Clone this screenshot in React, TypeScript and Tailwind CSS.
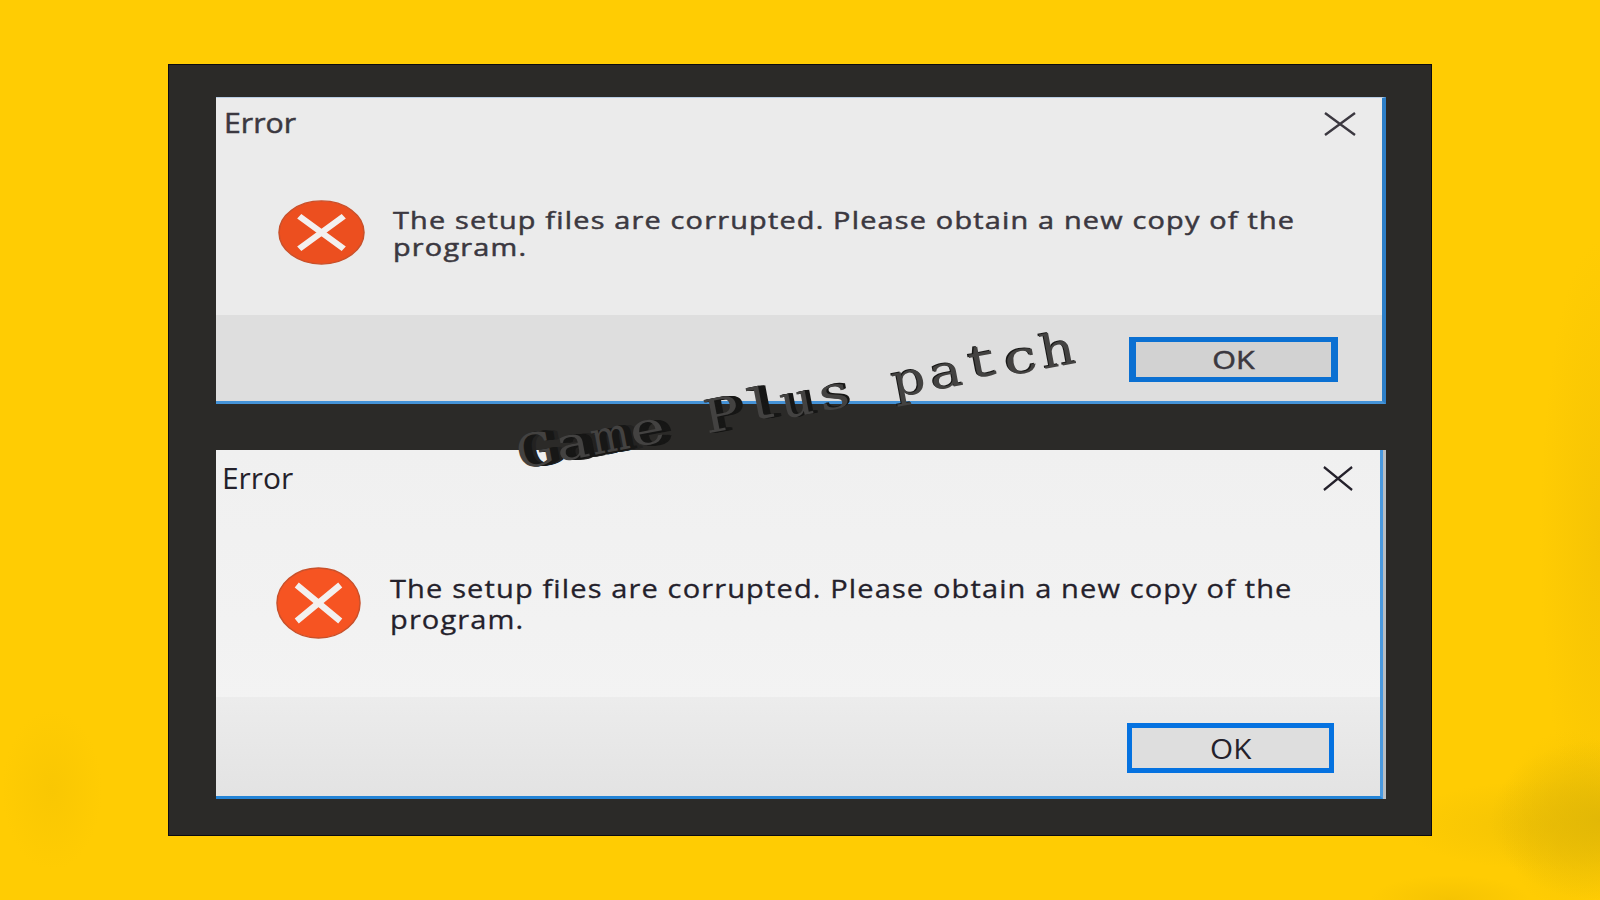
type DialogProps = {
    variant: "top" | "bottom";
}

type ArtLetter = {
    char: string;
    stretch: number;
    dx: number;
    dy: number;
    mono?: boolean;
}

// dx / dy is how far the extruded side of the letter reaches
const artLetters: ArtLetter[] = [
    {char: "G", stretch: 1, dx: 12, dy: 1},
    {char: "a", stretch: 1.2, dx: 13, dy: 2},
    {char: "m", stretch: 0.88, dx: 14, dy: 2},
    {char: "e", stretch: 1.28, dx: 7, dy: 2},
    {char: " ", stretch: 1, dx: 0, dy: 0},
    {char: "P", stretch: 1.15, dx: 6, dy: 1},
    {char: "l", stretch: 1.2, dx: 6, dy: 1, mono: true},
    {char: "u", stretch: 1.12, dx: 4, dy: 0},
    {char: "s", stretch: 1.3, dx: 2, dy: -1},
    {char: " ", stretch: 1, dx: 0, dy: 0},
    {char: "p", stretch: 1.15, dx: -1, dy: -1},
    {char: "a", stretch: 1.2, dx: -1, dy: -1},
    {char: "t", stretch: 1.3, dx: -1, dy: -1, mono: true},
    {char: "c", stretch: 1.3, dx: -1, dy: -1},
    {char: "h", stretch: 1.18, dx: -1, dy: -1},
];

function getExtrusion(dx: number, dy: number) {
    const steps = Math.max(Math.abs(dx), 1);
    const shadows: string[] = [];

    for (let i = 1; i <= steps; i++) {
        shadows.push(`${dx * i / steps}px ${dy * i / steps}px 0 ${i > 8 ? "#232221" : "#171716"}`);
    }

    return shadows.join(", ");
}

function WordArt() {
    return (
        <div className="absolute left-[522px] top-[422px] flex origin-bottom-left -rotate-[10.8deg] whitespace-pre font-['DejaVu_Serif',serif] text-[46px] leading-[62px] text-[#434241]">
            {artLetters.map((val, i) => (
                <span
                    key={i}
                    className={val.mono ? "flex w-[38px] justify-center font-['Liberation_Mono',monospace]" : "flex w-[38px] justify-center"}
                    style={{transform: `scaleX(${val.stretch})`, textShadow: getExtrusion(val.dx, val.dy)}}
                >
                    {val.char}
                </span>
            ))}
        </div>
    );
}

function CloseIcon({className}: {className: string}) {
    return (
        <svg className={className} viewBox="0 0 32 24" preserveAspectRatio="none" fill="none" stroke="currentColor" strokeWidth="2.4">
            <path d="M1 1L31 23M31 1L1 23" />
        </svg>
    );
}

function ErrorIcon({className}: {className: string}) {
    return (
        <svg className={className} viewBox="0 0 86 72" preserveAspectRatio="none">
            <ellipse cx="43" cy="36" rx="42" ry="35" fill="currentColor" stroke="#c9502a" strokeWidth="1.5" />
            <path d="M21 18L65 54M65 18L21 54" stroke="#f3f0ef" strokeWidth="6.5" />
        </svg>
    );
}

function ErrorDialog({variant}: DialogProps) {
    const isTop = variant === "top";

    return (
        <div className={isTop
            ? "flex h-[307px] w-[1170px] flex-col border-b-3 border-r-4 border-t border-b-[#4593d8] border-r-[#2d7fc8] border-t-[#b9cde4] bg-[#ebebeb] text-[#3b3840]"
            : "flex h-[349px] w-[1167px] flex-col border-b-3 border-r-3 border-b-[#2484d6] border-r-[#4a9ae0] bg-linear-to-b from-[#f0f0f0] to-[#f4f4f4] text-[#24212b] shadow-[3px_0_0_#b9bec2]"}
        >
            <div className={isTop ? "flex justify-between pl-[8px] pr-[26px] pt-[5px]" : "flex justify-between pl-[6px] pr-[27px] pt-[8px]"}>
                <h2 className={isTop
                    ? "origin-left scale-x-[1.08] text-[28px] leading-[38px] [-webkit-text-stroke:0.5px_#3b3840]"
                    : "origin-left scale-x-[1.03] text-[29px] leading-[40px]"}
                >
                    Error
                </h2>
                <CloseIcon className={isTop ? "mt-[9px] h-[24px] w-[32px]" : "mt-[8px] h-[25px] w-[30px]"} />
            </div>
            <div className={isTop ? "flex flex-1 pl-[62px]" : "flex flex-1 pl-[60px]"}>
                <ErrorIcon className={isTop ? "mt-[59px] h-[65px] w-[87px] shrink-0 text-[#ec4f1f]" : "mt-[69px] h-[72px] w-[85px] shrink-0 text-[#f65422]"} />
                <p className={isTop
                    ? "ml-[28px] mt-[65px] origin-left scale-x-[1.202] whitespace-nowrap text-[24px] leading-[27px] tracking-[1px] [-webkit-text-stroke:0.5px_#3b3840]"
                    : "ml-[29px] mt-[75px] origin-left scale-x-[1.117] whitespace-nowrap text-[26px] leading-[31px] tracking-[1px] [-webkit-text-stroke:0.3px_#24212b]"}
                >
                    The setup files are corrupted. Please obtain a new copy of the
                    <br />
                    program.
                </p>
            </div>
            <div className={isTop
                ? "flex h-[86px] shrink-0 items-center justify-end bg-[#dedede] pr-[44px] pt-[3px]"
                : "flex h-[99px] shrink-0 items-center justify-end bg-linear-to-b from-[#ececec] to-[#e3e3e3] pr-[46px] pt-[2px]"}
            >
                <button className={isTop
                    ? "flex h-[45px] w-[209px] items-center justify-center border-x-7 border-y-5 border-[#0b70d2] bg-[#d2d2d2] pt-px text-[25px] [-webkit-text-stroke:0.5px_#3b3840]"
                    : "flex h-[50px] w-[207px] items-center justify-center border-5 border-[#0572e0] bg-[#dedede] pt-[3px] text-[27px]"}
                >
                    <span className={isTop ? "scale-x-[1.22]" : "scale-x-[1.1]"}>OK</span>
                </button>
            </div>
        </div>
    );
}

export default function App() {
    return (
        <main className="relative flex h-[900px] w-[1600px] items-start justify-center overflow-hidden bg-[#ffcc03] bg-[radial-gradient(ellipse_110px_80px_at_1600px_820px,#e2b806,transparent),radial-gradient(ellipse_70px_90px_at_1570px_820px,#e9bc0680,transparent),radial-gradient(ellipse_150px_45px_at_1550px_825px,#e9bc0690,transparent),radial-gradient(ellipse_60px_300px_at_1600px_540px,#f6c404,transparent),radial-gradient(ellipse_50px_80px_at_52px_790px,#f9c703,transparent),radial-gradient(ellipse_80px_25px_at_1450px_900px,#f5c303,transparent)] pt-16 font-['Open_Sans','Noto_Sans',sans-serif]">
            <div className="flex h-[772px] w-[1264px] flex-col gap-[46px] border border-[#0b0b10] bg-[#2b2a28] pl-[47px] pt-[32px]">
                <ErrorDialog variant="top" />
                <ErrorDialog variant="bottom" />
            </div>
            <WordArt />
        </main>
    );
}
